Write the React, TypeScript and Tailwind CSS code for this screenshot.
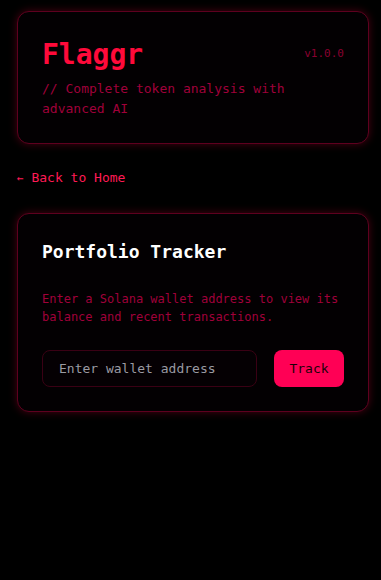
import { useState } from 'react'

const mono = 'font-["DejaVu_Sans_Mono","Liberation_Mono",monospace]'

export default function App() {
  const [address, setAddress] = useState('')

  return (
    <div className={`min-h-screen bg-black ${mono} pl-[17px] pr-[12px] pt-[11px] pb-8`}>
      {/* Header card */}
      <div className="rounded-xl border border-[#5e001f] bg-[#030002] p-6 shadow-[0_0_8px_rgba(255,0,60,0.28)]">
        <div className="flex items-start justify-between">
          <h1 className="mt-[5px] text-[28px] font-bold leading-[28px] text-[#ff0a3a]">Flaggr</h1>
          <span className="pt-[10px] text-[11px] leading-4 text-[#8a0030]">v1.0.0</span>
        </div>
        <p className="mt-[10px] text-[13px] leading-5 text-[#a0003a]">
          // Complete token analysis with advanced AI
        </p>
      </div>

      <a href="#" className="mt-6 mb-[25px] block h-5 text-[13px] leading-5 text-[#ff1a55]">
        <span className="text-[11px] leading-none">←</span> Back to Home
      </a>

      {/* Tracker card */}
      <div className="rounded-xl border border-[#5e001f] bg-[#030002] p-6 shadow-[0_0_8px_rgba(255,0,60,0.28)]">
        <h2 className="mb-6 text-lg font-bold leading-7 text-white">Portfolio Tracker</h2>
        <p className="mb-6 text-xs leading-[18px] text-[#a0003a]">
          Enter a Solana wallet address to view its balance and recent transactions.
        </p>
        <div className="flex gap-[17px]">
          <input
            value={address}
            onChange={(e) => setAddress(e.target.value)}
            placeholder="Enter wallet address"
            className="h-[37px] min-w-0 flex-1 rounded-lg border border-[#3a0014] bg-[#050003] px-4 text-[13px] text-gray-200 placeholder:text-[#9a9aa2] outline-none"
          />
          <button className="h-[37px] w-[70px] rounded-lg bg-[#ff0055] text-[13px] text-[#1a0008]">
            Track
          </button>
        </div>
      </div>
    </div>
  )
}
